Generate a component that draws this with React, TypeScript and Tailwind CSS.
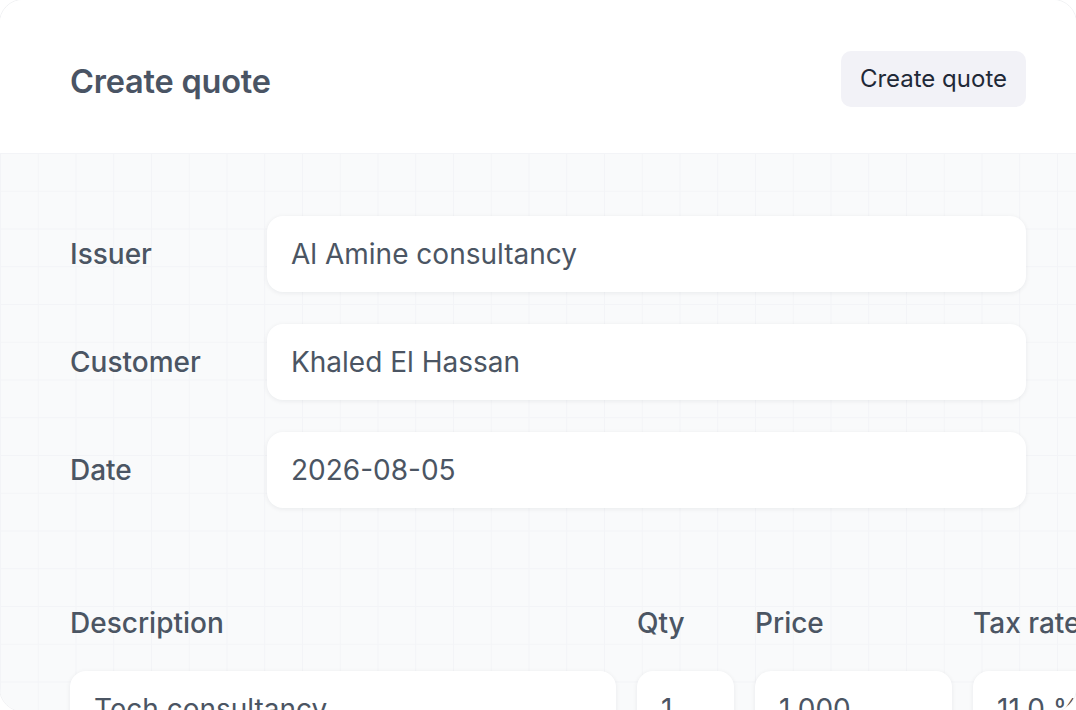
import React from 'react';

const fields = [
  { label: 'Issuer', value: 'Al Amine consultancy' },
  { label: 'Customer', value: 'Khaled El Hassan' },
  { label: 'Date', value: '2026-08-05' },
];

const inputCls =
  'bg-white rounded-[16px] shadow-[0_1px_5px_rgba(16,24,40,0.07)] h-[76px] flex items-center px-[24px] text-[28px] leading-[40px] text-[#4b5563]';

const App: React.FC = () => {
  return (
    <div className="w-[1076px] h-[710px] overflow-hidden bg-white" style={{ fontFamily: 'Inter, "Noto Sans", sans-serif' }}>
      <div className="-mt-px -ml-px w-[1078px] h-[713px] rounded-[24px] border border-[#f1f2f4] overflow-hidden flex flex-col">
        {/* header */}
        <div className="h-[153px] shrink-0 bg-white flex items-center justify-between pl-[70px] pr-[50px] pt-[4px]">
          <h1 className="text-[32.5px] leading-[44px] font-semibold text-[#4a5464] tracking-[-0.2px] pt-[6px]">Create quote</h1>
          <button className="h-[56px] px-[19px] rounded-[10px] bg-[#f2f2f7] text-[24px] leading-[32px] text-[#1f2937]">
            Create quote
          </button>
        </div>

        {/* body */}
        <div className="flex-1 bg-[#f9fafb] bg-[linear-gradient(to_right,#f3f4f7_1px,transparent_1px),linear-gradient(to_bottom,#f3f4f7_1px,transparent_1px)] bg-[size:37.75px_37.75px] pl-[70px] pr-[50px] pt-[63px]">
          <div className="flex flex-col gap-[32px]">
            {fields.map((f) => (
              <div key={f.label} className="flex items-center">
                <div className="w-[197px] text-[28px] leading-[40px] font-medium text-[#4b5563]">{f.label}</div>
                <div className={`${inputCls} flex-1`}>{f.value}</div>
              </div>
            ))}
          </div>

          <div className="mt-[95px] flex gap-[21px] text-[28px] leading-[40px] font-medium text-[#4b5563] w-[1200px]">
            <div className="w-[546px]">Description</div>
            <div className="w-[97px]">Qty</div>
            <div className="w-[197px]">Price</div>
            <div className="w-[200px]">Tax rate</div>
          </div>

          <div className="mt-[28px] flex gap-[21px] w-[1200px]">
            <div className={`${inputCls} w-[546px]`}>Tech consultancy</div>
            <div className={`${inputCls} w-[97px]`}>1</div>
            <div className={`${inputCls} w-[197px]`}>1,000</div>
            <div className={`${inputCls} w-[200px]`}>11.0 %</div>
          </div>
        </div>
      </div>
    </div>
  );
};

export default App;
